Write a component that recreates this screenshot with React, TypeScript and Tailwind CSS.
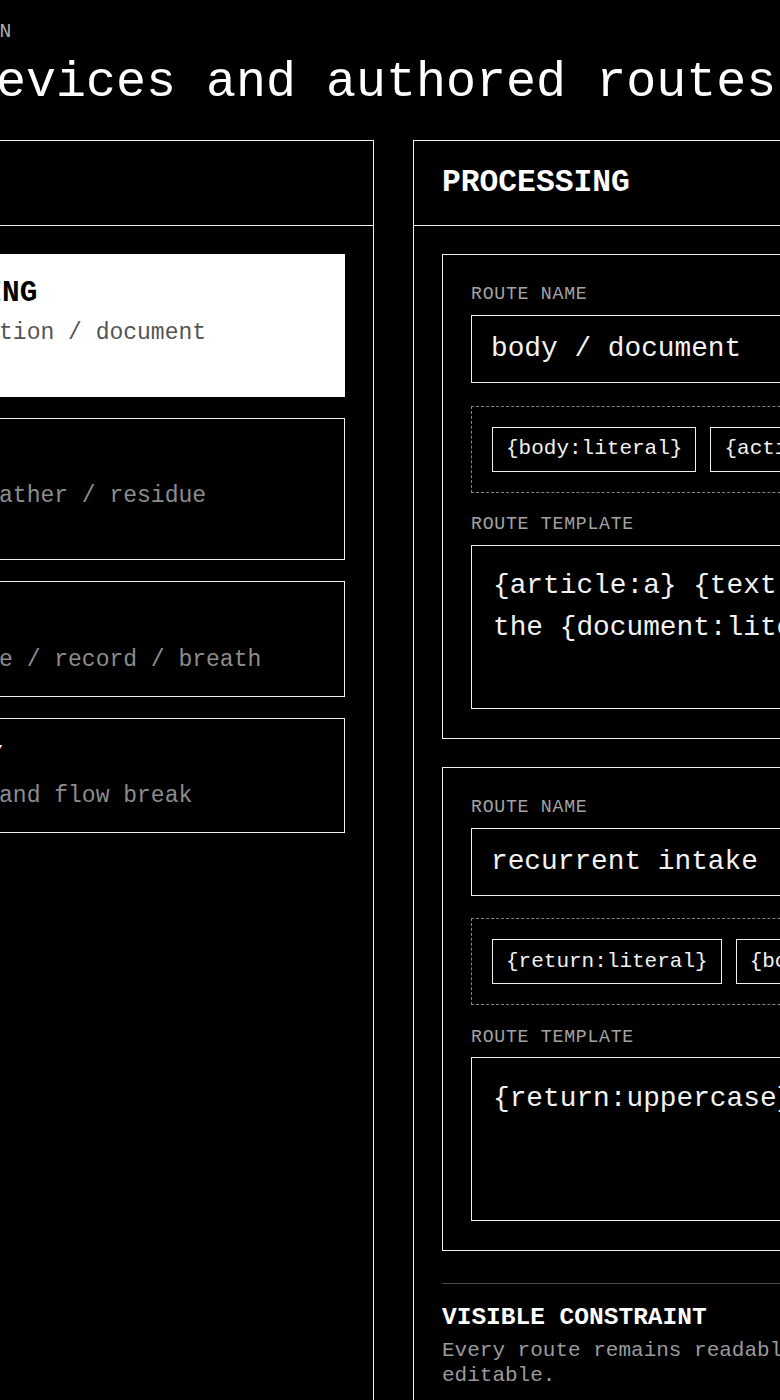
import React from "react";

type Device = { title: string; subtitle: string; meta?: string; selected?: boolean };

const devices: Device[] = [
  { title: "PROCESSING", subtitle: "ear / notation / document", meta: "2 routes", selected: true },
  { title: "SURFACE", subtitle: "storm / weather / residue", meta: "1 route" },
  { title: "CAPTURE", subtitle: "mic / voice / record / breath" },
  { title: "ASSEMBLY", subtitle: "line wrap and flow break" },
];

type Route = { name: string; tokens: string[]; template: string };

const routes: Route[] = [
  {
    name: "body / document",
    tokens: ["{body:literal}", "{action:verb}", "{document:literal}"],
    template: "{article:a} {text:noun}\nthe {document:literal}.",
  },
  {
    name: "recurrent intake",
    tokens: ["{return:literal}", "{body:noun}", "{intake:verb}"],
    template: "{return:uppercase} {body:noun}",
  },
];

function DeviceCard({ d }: { d: Device }) {
  return (
    <div
      className={
        d.selected
          ? "border border-white bg-white px-[15px] py-[22.4px] text-black"
          : "border border-[#f0f0f0] px-[15px] py-[22px] text-white"
      }
    >
      <div className="text-[29.4px] font-bold leading-[33.6px] whitespace-nowrap">{d.title}</div>
      <div
        className={
          d.selected
            ? "mt-[8px] text-[23px] leading-[28px] text-[#555555] whitespace-nowrap"
            : "mt-[8px] text-[23px] leading-[28px] text-[#8c8c8c] whitespace-nowrap"
        }
      >
        {d.subtitle}
      </div>
      {d.meta && (
        <div
          className={
            d.selected
              ? "mt-[6.6px] text-[15.4px] leading-[19.6px] uppercase text-[#555555]"
              : "mt-[7.4px] text-[15.4px] leading-[19.6px] uppercase text-[#8c8c8c]"
          }
        >
          {d.meta}
        </div>
      )}
    </div>
  );
}

function RouteCard({ r }: { r: Route }) {
  return (
    <div className="border border-[#f0f0f0] px-[28px] pt-[28px] pb-[29px] overflow-hidden">
      <div className="text-[18.2px] leading-[23px] tracking-[0.04em] text-[#a3a3a3]">ROUTE NAME</div>
      <div className="mt-[9px] h-[68px] border border-[#f0f0f0] px-[19px] flex items-center text-[27.8px] text-[#f2f2f2] whitespace-nowrap">
        {r.name}
      </div>
      <div className="mt-[22.5px] border border-dashed border-[#858585] p-[20px] flex gap-[14px] overflow-hidden">
        {r.tokens.map((t) => (
          <span
            key={t}
            className="shrink-0 h-[45px] border border-[#f0f0f0] px-[13px] flex items-center text-[21px] text-[#f2f2f2] whitespace-nowrap"
          >
            {t}
          </span>
        ))}
      </div>
      <div className="mt-[20.5px] text-[18.2px] leading-[23px] tracking-[0.04em] text-[#a3a3a3]">ROUTE TEMPLATE</div>
      <div className="mt-[8.5px] h-[164px] border border-[#f0f0f0] px-[21px] py-[19.6px] text-[27.8px] leading-[42px] text-[#f2f2f2] whitespace-pre overflow-hidden">
        {r.template}
      </div>
    </div>
  );
}

export default function App() {
  return (
    <div className="min-h-screen bg-black text-white font-['Liberation_Mono',monospace] flex justify-center overflow-hidden">
      <div className="w-[1228px] shrink-0 px-[40px] pt-[21px] pb-[80px]">
        <p className="text-[19.6px] leading-[22.2px] tracking-[0.18em] text-[#b0b0b0]">CONFIGURATION</p>
        <h1 className="mt-[10.8px] text-[50px] leading-[57px] text-white whitespace-nowrap">
          Four devices and authored routes
        </h1>
        <div className="mt-[29px] grid grid-cols-[558px_551px] gap-x-[39px]">
          <section className="border border-[#f0f0f0] flex flex-col">
            <header className="h-[85px] border-b border-[#f0f0f0] px-[28px] flex items-center">
              <h2 className="text-[31px] font-bold">DEVICES</h2>
            </header>
            <div className="p-[28px] flex flex-col gap-[21px]">
              {devices.map((d) => (
                <DeviceCard key={d.title} d={d} />
              ))}
            </div>
          </section>
          <section className="border border-[#f0f0f0] flex flex-col">
            <header className="h-[85px] border-b border-[#f0f0f0] px-[28px] flex items-center">
              <h2 className="text-[31.3px] font-bold">PROCESSING</h2>
            </header>
            <div className="p-[28px] flex flex-col gap-[28px]">
              {routes.map((r) => (
                <RouteCard key={r.name} r={r} />
              ))}
              <div className="mt-[4px] border-t border-[#4d4d4d] pt-[19.6px]">
                <div className="text-[24.5px] font-bold leading-[27.5px] text-white">VISIBLE CONSTRAINT</div>
                <p className="mt-[7px] text-[21px] leading-[25px] text-[#9a9a9a] whitespace-nowrap">
                  Every route remains readable and fully
                  <br />
                  editable.
                </p>
              </div>
            </div>
          </section>
        </div>
      </div>
    </div>
  );
}
